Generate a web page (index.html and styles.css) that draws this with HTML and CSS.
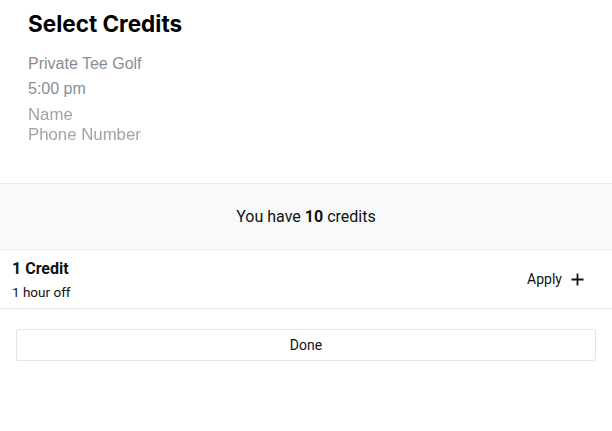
FILE: index.html
```html
<!DOCTYPE html>
<html>
<head>
<meta charset="utf-8">
<link rel="stylesheet" href="styles.css">
</head>
<body>
<div class="page">
  <header class="head">
    <h1 class="title">Select Credits</h1>
    <div class="venue">Private Tee Golf</div>
    <div class="time">5:00 pm</div>
    <div class="contact">
      <div>Name</div>
      <div>Phone Number</div>
    </div>
  </header>
  <div class="balance">You have <b>10</b> credits</div>
  <div class="row">
    <div class="info">
      <div class="name">1 Credit</div>
      <div class="desc">1 hour off</div>
    </div>
    <button class="apply">Apply
      <svg width="13" height="13" viewBox="0 0 13 13"><path d="M6.5 0.5v12M0.5 6.5h12" stroke="#111" stroke-width="1.8" fill="none"/></svg>
    </button>
  </div>
  <div class="actions">
    <button class="done">Done</button>
  </div>
</div>
</body>
</html>
```
FILE: styles.css
```css
* { box-sizing: border-box; }
html, body { margin: 0; padding: 0; background: #fff; }
body { font-family: Roboto, "Liberation Sans", Arial, sans-serif; color: #111; }
.page { width: 612px; }
.head { padding: 10px 28px 38px; }
.title { font-family: Inter, "Liberation Sans", sans-serif; font-size: 22.5px; font-weight: 700; margin: 0 0 14px; line-height: 28px; color: #000; }
.venue, .time { font-family: "Liberation Sans", Arial, sans-serif; font-size: 16px; color: #868e96; line-height: 24px; }
.time { margin-top: 1px; }
.contact { margin-top: 4px; font-family: "Liberation Sans", Arial, sans-serif; font-size: 16.8px; color: #a3a3a3; line-height: 20px; filter: blur(0.35px); }
.balance { border-top: 1px solid #e9ecef; border-bottom: 1px solid #e9ecef; background: #f8f9fa; height: 67px; display: flex; align-items: center; justify-content: center; font-size: 16px; color: #111; }
.balance b { font-weight: 700; margin: 0 4px; }
.row { display: flex; align-items: center; justify-content: space-between; height: 59px; padding: 0 12px; border-bottom: 1px solid #e9ecef; }
.name { font-size: 16px; font-weight: 700; line-height: 20px; }
.desc { font-size: 13.5px; line-height: 16px; margin-top: 5px; }
.apply { background: none; border: 0; display: flex; align-items: center; gap: 9px; font-family: Roboto, sans-serif; font-size: 14px; color: #111; padding: 0 16px 0 0; }
.actions { padding: 20px 16px; }
.done { width: 100%; height: 32px; background: #fff; border: 1px solid #e5e5e5; border-radius: 2px; font-family: Roboto, sans-serif; font-size: 14px; color: #111; }
```
